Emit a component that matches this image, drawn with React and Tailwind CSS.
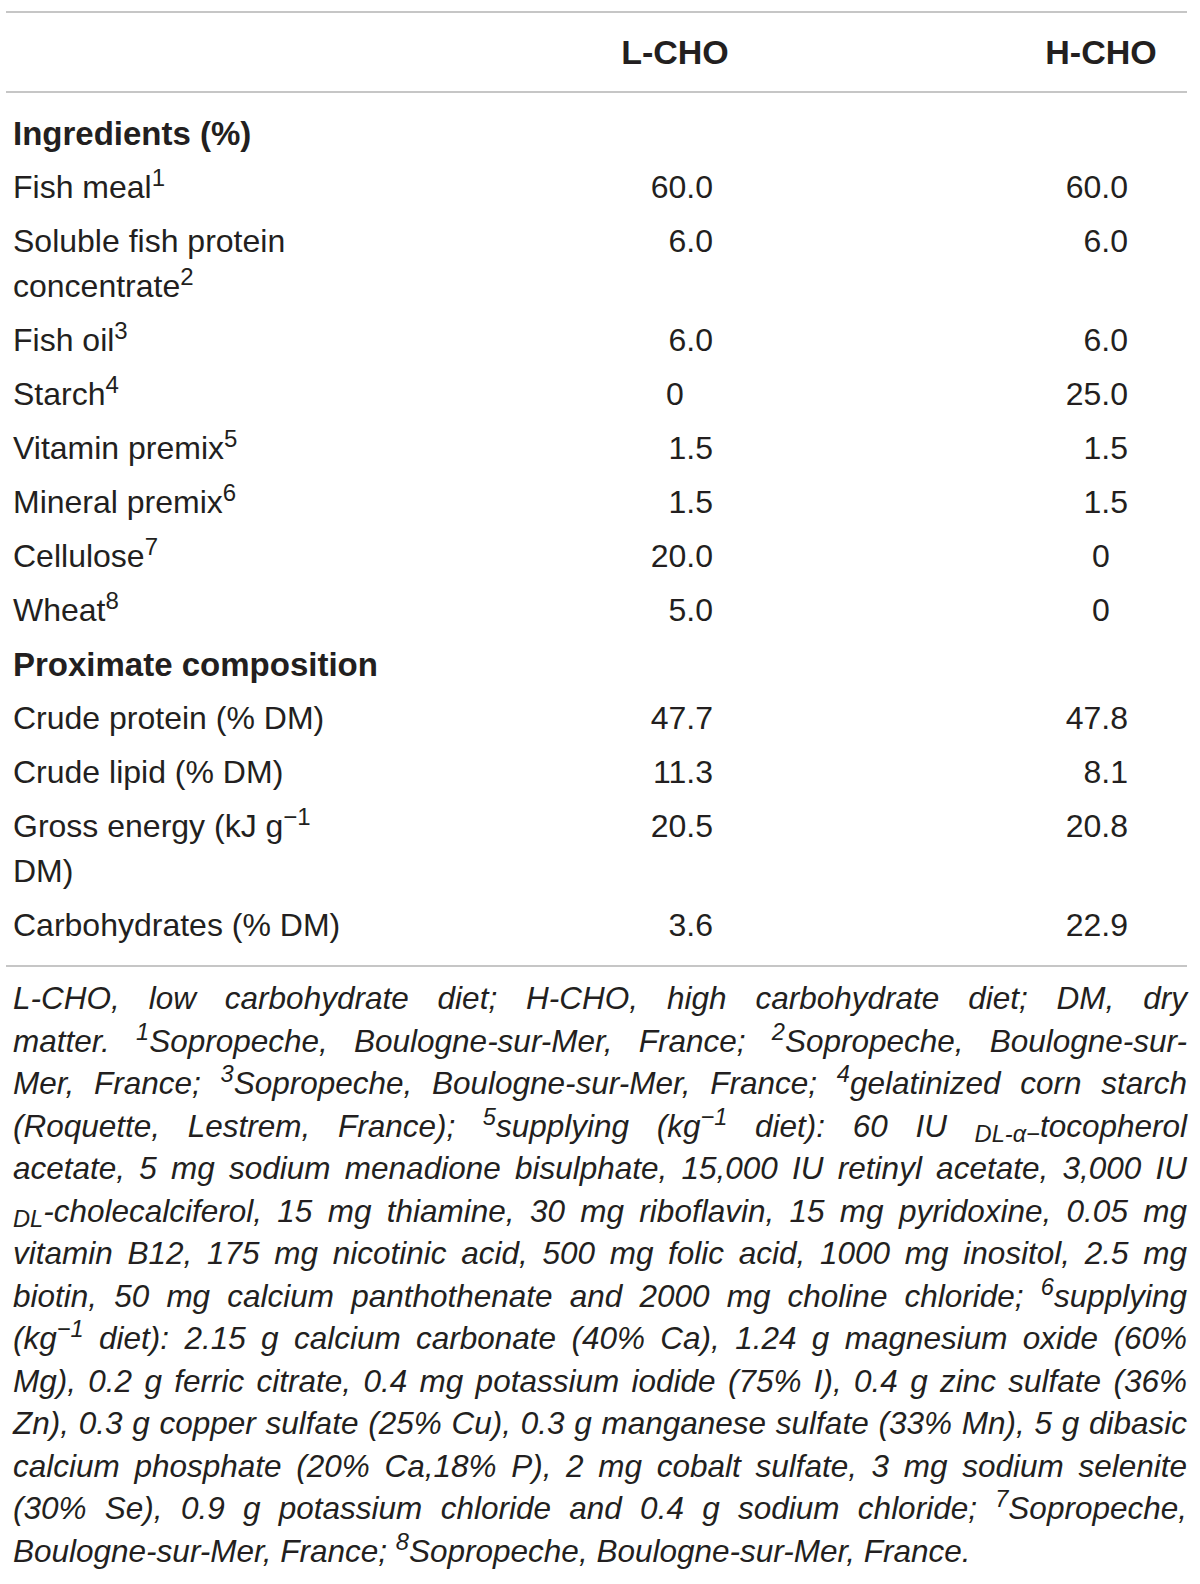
import React from "react";

const rows = [
  { type: "head", label: "Ingredients (%)" },
  { label: <>Fish meal<sup>1</sup></>, l: "60.0", h: "60.0" },
  { label: <>Soluble fish protein concentrate<sup>2</sup></>, l: "6.0", h: "6.0" },
  { label: <>Fish oil<sup>3</sup></>, l: "6.0", h: "6.0" },
  { label: <>Starch<sup>4</sup></>, l: "0", h: "25.0" },
  { label: <>Vitamin premix<sup>5</sup></>, l: "1.5", h: "1.5" },
  { label: <>Mineral premix<sup>6</sup></>, l: "1.5", h: "1.5" },
  { label: <>Cellulose<sup>7</sup></>, l: "20.0", h: "0" },
  { label: <>Wheat<sup>8</sup></>, l: "5.0", h: "0" },
  { type: "head", label: "Proximate composition" },
  { label: "Crude protein (% DM)", l: "47.7", h: "47.8" },
  { label: "Crude lipid (% DM)", l: "11.3", h: "8.1" },
  { label: <>Gross energy (kJ g<sup>−1</sup> DM)</>, l: "20.5", h: "20.8" },
  { label: "Carbohydrates (% DM)", l: "3.6", h: "22.9" },
];

// footnote lines, kept as in the printed table
const notes = [
  <>L-CHO, low carbohydrate diet; H-CHO, high carbohydrate diet; DM, dry</>,
  <>matter. <sup>1</sup>Sopropeche, Boulogne-sur-Mer, France; <sup>2</sup>Sopropeche, Boulogne-sur-</>,
  <>Mer, France; <sup>3</sup>Sopropeche, Boulogne-sur-Mer, France; <sup>4</sup>gelatinized corn starch</>,
  <>(Roquette, Lestrem, France); <sup>5</sup>supplying (kg<sup>−1</sup> diet): 60 IU <sub>DL-α−</sub>tocopherol</>,
  <>acetate, 5 mg sodium menadione bisulphate, 15,000 IU retinyl acetate, 3,000 IU</>,
  <><sub>DL</sub>-cholecalciferol, 15 mg thiamine, 30 mg riboflavin, 15 mg pyridoxine, 0.05 mg</>,
  <>vitamin B12, 175 mg nicotinic acid, 500 mg folic acid, 1000 mg inositol, 2.5 mg</>,
  <>biotin, 50 mg calcium panthothenate and 2000 mg choline chloride; <sup>6</sup>supplying</>,
  <>(kg<sup>−1</sup> diet): 2.15 g calcium carbonate (40% Ca), 1.24 g magnesium oxide (60%</>,
  <>Mg), 0.2 g ferric citrate, 0.4 mg potassium iodide (75% I), 0.4 g zinc sulfate (36%</>,
  <>Zn), 0.3 g copper sulfate (25% Cu), 0.3 g manganese sulfate (33% Mn), 5 g dibasic</>,
  <>calcium phosphate (20% Ca,18% P), 2 mg cobalt sulfate, 3 mg sodium selenite</>,
  <>(30% Se), 0.9 g potassium chloride and 0.4 g sodium chloride; <sup>7</sup>Sopropeche,</>,
  <>Boulogne-sur-Mer, France; <sup>8</sup>Sopropeche, Boulogne-sur-Mer, France.</>,
];

const Cell = ({ value, pad }) => (
  <div className={value === "0" ? "text-center" : `text-right ${pad}`}>{value}</div>
);

export default function App() {
  return (
    <div className="min-h-screen bg-white pt-[11px] font-['Liberation_Sans',Arial,sans-serif] text-[#231f20]">
      <div className="ml-[6px] w-[1181px]">
        {/* header */}
        <div className="grid h-[82px] grid-cols-[583px_172px_254px_172px] items-center border-y-2 border-[#c6c6c6] text-[34px] font-bold">
          <div />
          <div className="text-center">L-CHO</div>
          <div />
          <div className="text-center">H-CHO</div>
        </div>

        {/* body */}
        <div className="border-b-2 border-[#c6c6c6] pt-[13px] pb-[13px] text-[32px] leading-[45px]">
          {rows.map((r, i) =>
            r.type === "head" ? (
              <div key={i} className="py-[4.5px] pl-[7px] text-[33px] font-bold">
                {r.label}
              </div>
            ) : (
              <div key={i} className="grid grid-cols-[583px_172px_254px_172px] items-start py-[4.5px]">
                <div className="max-w-[362px] pl-[7px]">{r.label}</div>
                <Cell value={r.l} pad="pr-[48px]" />
                <div />
                <Cell value={r.h} pad="pr-[59px]" />
              </div>
            )
          )}
        </div>

        {/* footnote */}
        <div className="pt-[10px] pl-[7px] text-justify text-[31.5px] italic leading-[42.5px]">
          {notes.map((n, i) => (
            <span
              key={i}
              className={`block ${i === notes.length - 1 ? "[text-align-last:left]" : "[text-align-last:justify]"}`}
            >
              {n}
            </span>
          ))}
        </div>
      </div>
    </div>
  );
}
